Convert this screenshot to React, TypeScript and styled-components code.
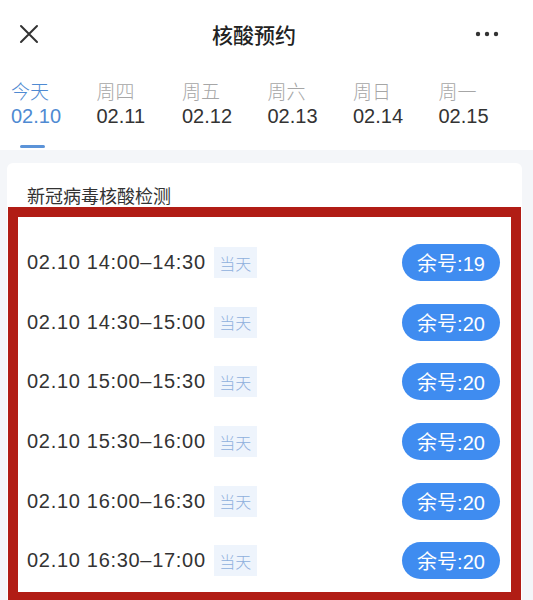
import React, { FC } from 'react';
import styled, { createGlobalStyle } from 'styled-components';

type Day = {
  week: string;
  date: string;
};

type Slot = {
  time: string;
  left: number;
};

const days: Day[] = [
  { week: '今天', date: '02.10' },
  { week: '周四', date: '02.11' },
  { week: '周五', date: '02.12' },
  { week: '周六', date: '02.13' },
  { week: '周日', date: '02.14' },
  { week: '周一', date: '02.15' },
];

const slots: Slot[] = [
  { time: '02.10 14:00–14:30', left: 19 },
  { time: '02.10 14:30–15:00', left: 20 },
  { time: '02.10 15:00–15:30', left: 20 },
  { time: '02.10 15:30–16:00', left: 20 },
  { time: '02.10 16:00–16:30', left: 20 },
  { time: '02.10 16:30–17:00', left: 20 },
];

const GlobalStyle = createGlobalStyle`
  html, body {
    margin: 0;
    padding: 0;
    background: #ffffff;
    font-family: "Liberation Sans", "Noto Sans CJK SC", sans-serif;
    color: #333333;
  }
`;

const App: FC = () => {
  return (
    <>
      <GlobalStyle />
      <Page>
        <TopBar>
          <IconButton aria-label="close">
            <svg width="20" height="20" viewBox="0 0 20 20">
              <path d="M2 2 L18 18 M18 2 L2 18" stroke="#333" strokeWidth="2" strokeLinecap="round" />
            </svg>
          </IconButton>
          <Title>核酸预约</Title>
          <IconButton aria-label="more">
            <svg width="24" height="6" viewBox="0 0 24 6">
              <circle cx="3" cy="3" r="2.2" fill="#333" />
              <circle cx="12" cy="3" r="2.2" fill="#333" />
              <circle cx="21" cy="3" r="2.2" fill="#333" />
            </svg>
          </IconButton>
        </TopBar>

        <Tabs>
          {days.map((d, i) => (
            <Tab key={d.date}>
              <Week $active={i === 0}>{d.week}</Week>
              <DateText $active={i === 0}>{d.date}</DateText>
              {i === 0 && <Underline />}
            </Tab>
          ))}
        </Tabs>

        <Body>
          <Card>
            <CardTitle>新冠病毒核酸检测</CardTitle>
            <SlotList>
              {slots.map((s) => (
                <SlotRow key={s.time}>
                  <TimeText>{s.time}</TimeText>
                  <DayTag>当天</DayTag>
                  <Remain>余号:{s.left}</Remain>
                </SlotRow>
              ))}
            </SlotList>
          </Card>
        </Body>
      </Page>
    </>
  );
};

export default App;

const Page = styled.div`
  width: 533px;
  height: 600px;
  overflow: hidden;
  display: flex;
  flex-direction: column;
`;

const TopBar = styled.div`
  height: 68px;
  display: flex;
  align-items: center;
  justify-content: space-between;
  padding: 0 34px 0 19px;
  flex-shrink: 0;
`;

const IconButton = styled.div`
  display: flex;
  align-items: center;
  justify-content: center;
`;

const Title = styled.div`
  font-family: "Noto Sans CJK SC", sans-serif;
  font-size: 21px;
  font-weight: 500;
  color: #222;
  margin-right: 6px;
`;

const Tabs = styled.div`
  height: 82px;
  display: flex;
  gap: 34.5px;
  padding-left: 11px;
  flex-shrink: 0;
`;

const Tab = styled.div`
  position: relative;
  display: flex;
  flex-direction: column;
  align-items: flex-start;
  padding-top: 10px;
  width: 51px;
`;

const Week = styled.div<{ $active: boolean }>`
  font-family: "Noto Sans CJK SC", sans-serif;
  font-size: 19px;
  line-height: 26px;
  color: ${(p) => (p.$active ? '#4f8ad2' : '#a6a6a6')};
  font-weight: 300;
`;

const DateText = styled.div<{ $active: boolean }>`
  font-size: 20px;
  line-height: 24px;
  color: ${(p) => (p.$active ? '#4f8ad2' : '#333')};
`;

const Underline = styled.div`
  position: absolute;
  left: 9px;
  bottom: 2px;
  width: 25px;
  height: 3px;
  border-radius: 2px;
  background: #5b93d8;
`;

const Body = styled.div`
  flex: 1;
  background: #f4f6f9;
  padding: 13px 11px 0 7px;
`;

const Card = styled.div`
  background: #ffffff;
  border-radius: 6px 6px 0 0;
  height: 100%;
`;

const CardTitle = styled.div`
  font-family: "Noto Sans CJK SC", sans-serif;
  font-size: 18px;
  line-height: 24px;
  color: #333;
  padding: 20px 0 0 20px;
`;

const SlotList = styled.div`
  box-sizing: border-box;
  margin: 0 1px;
  border: 10px solid #b11d15;
  padding: 16px 11px 0 9px;
  height: 395px;
  display: flex;
  flex-direction: column;
`;

const SlotRow = styled.div`
  height: 59.6px;
  flex-shrink: 0;
  display: flex;
  align-items: center;
`;

const TimeText = styled.div`
  font-size: 20px;
  letter-spacing: 0.7px;
  color: #333;
`;

const DayTag = styled.div`
  margin-left: 8px;
  width: 43px;
  height: 31px;
  display: flex;
  align-items: center;
  justify-content: center;
  background: #eef4fc;
  color: #8fb0dc;
  font-family: "Noto Sans CJK SC", sans-serif;
  font-size: 16px;
  font-weight: 300;
`;

const Remain = styled.div`
  margin-left: auto;
  width: 98px;
  height: 37px;
  border-radius: 19px;
  background: #3f8cf0;
  color: #ffffff;
  font-size: 20px;
  font-family: "Liberation Sans", "Noto Sans CJK SC", sans-serif;
  display: flex;
  align-items: center;
  justify-content: center;
`;
